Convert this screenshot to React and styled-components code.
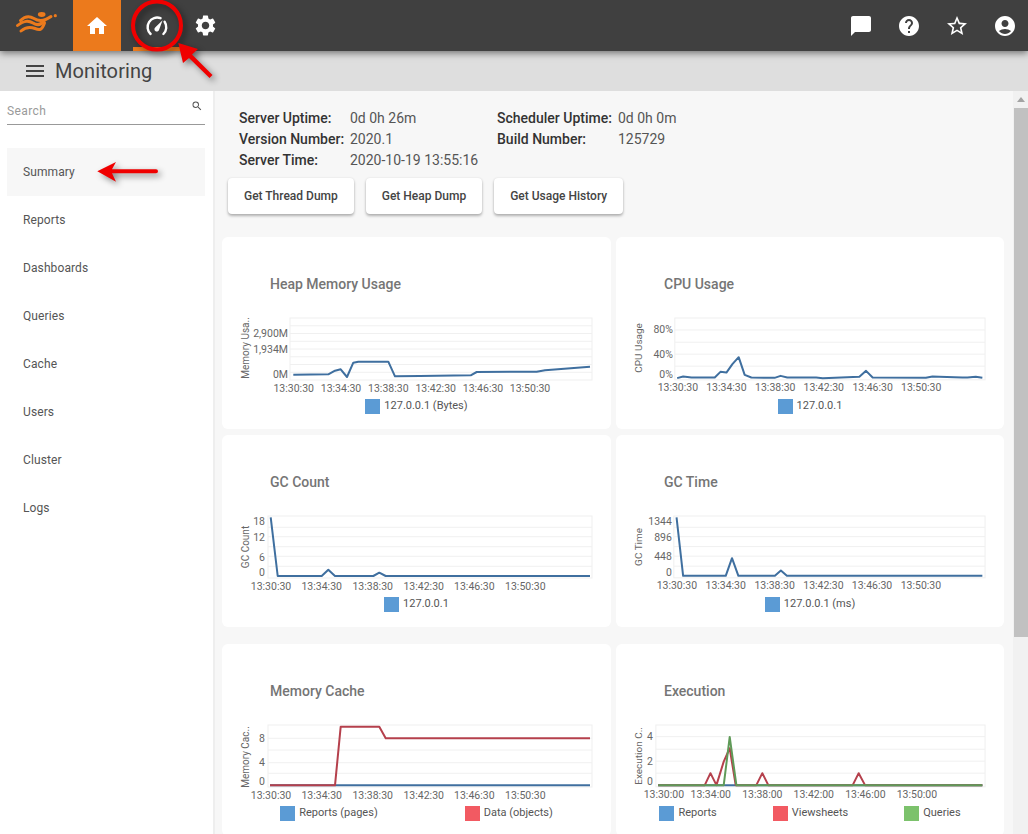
import React from 'react'
import styled, { createGlobalStyle } from 'styled-components'
import { MdHome, MdSettings, MdMenu, MdSearch, MdChatBubble, MdHelp, MdStarBorder, MdAccountCircle } from 'react-icons/md'

const BLUE = '#3f6f9f'
const RED = '#b5404c'
const GREEN = '#5f9a58'
const SWATCH_BLUE = '#5b9bd5'
const SWATCH_RED = '#f25a62'
const SWATCH_GREEN = '#7cc26c'

const navItems = ['Summary', 'Reports', 'Dashboards', 'Queries', 'Cache', 'Users', 'Cluster', 'Logs']

const times30 = ['13:30:30', '13:34:30', '13:38:30', '13:42:30', '13:46:30', '13:50:30']
const times00 = ['13:30:00', '13:34:00', '13:38:00', '13:42:00', '13:46:00', '13:50:00']

const heap = {
  title: 'Heap Memory Usage',
  axis: 'Memory Usa..',
  axisY: 32,
  plot: [68, 370],
  grid: [9.75, 17.5, 25.25, 33, 40.75, 48.5, 56.25],
  tickX: 66,
  ticks: [['2,900M', 17.7], ['1,934M', 33], ['0M', 58.3]],
  labels: times30,
  labelX: [71.7, 119, 166.3, 213.7, 261, 308],
  lines: [{ color: BLUE, points: '71.3,58.7 106.3,58.3 113,54.7 118.7,53.3 125,61 131.3,46.7 136.3,45.7 166.3,45.7 173,60.3 198,60 248.7,59.3 254.7,56 314.7,55.7 323,54.3 368,50.7' }],
  legend: [{ color: SWATCH_BLUE, text: '127.0.0.1 (Bytes)' }],
}

const cpu = {
  title: 'CPU Usage',
  axis: 'CPU Usage',
  axisY: 32,
  plot: [59, 370],
  grid: [14, 26.3, 38.3, 50.3],
  tickX: 57,
  ticks: [['80%', 14], ['40%', 38.3], ['0%', 58.3]],
  labels: times30,
  labelX: [62, 110.7, 159.7, 208.3, 257.3, 306],
  lines: [{ color: BLUE, points: '61.3,62.3 67.3,60.7 75.7,61.7 99,61.7 104.7,56 110.7,56.7 116.7,48.3 123,41.3 129,59 135.7,61.7 159,62 165,60 171.7,61.7 200.7,61.7 207.3,62.3 244,61 250.7,55 257.3,61.7 310.7,62 317.3,60.7 324,61 347.3,61.7 352.3,61.7 360.7,61 367.3,62' }],
  legend: [{ color: SWATCH_BLUE, text: '127.0.0.1' }],
}

const gcCount = {
  title: 'GC Count',
  axis: 'GC Count',
  axisY: 33,
  plot: [46, 370],
  grid: [13.3, 22.7, 32.7, 42.3, 52.3],
  tickX: 43,
  ticks: [['18', 7], ['12', 23.3], ['6', 43], ['0', 58.3]],
  labels: times30,
  labelX: [49, 99.7, 150.7, 201.7, 252.3, 303.3],
  lines: [{ color: BLUE, points: '48.7,3.3 55.7,62 99.7,62 106.3,55.7 113,62 151.3,62 157.3,58.7 163.7,62 368,62' }],
  legend: [{ color: SWATCH_BLUE, text: '127.0.0.1' }],
}

const gcTime = {
  title: 'GC Time',
  axis: 'GC Time',
  axisY: 33,
  plot: [58, 370],
  grid: [13.3, 22.7, 32.7, 42.3, 52.3],
  tickX: 56,
  ticks: [['1344', 7.7], ['896', 23.3], ['448', 43], ['0', 58.3]],
  labels: times30,
  labelX: [61, 110, 159, 208, 256.7, 305.7],
  lines: [{ color: BLUE, points: '60.7,3.3 67.3,62 110,62 116.3,44.3 122.7,62 159.3,62 165.3,56.7 171.3,62 367.3,62' }],
  legend: [{ color: SWATCH_BLUE, text: '127.0.0.1 (ms)' }],
}

const memoryCache = {
  title: 'Memory Cache',
  axis: 'Memory Cac..',
  axisY: 34,
  plot: [46, 370],
  grid: [15.3, 27, 39.7, 50.3],
  tickX: 43,
  ticks: [['8', 15.7], ['4', 39], ['0', 58.3]],
  labels: times30,
  labelX: [49, 99.7, 150.7, 201.7, 252.3, 303.3],
  lines: [
    { color: BLUE, points: '48,62.3 368,62.3' },
    { color: RED, points: '48,62.3 113,62.3 118.7,3.7 157.3,3.7 163.7,15.3 368,15.3' },
  ],
  legend: [
    { color: SWATCH_BLUE, text: 'Reports (pages)' },
    { color: SWATCH_RED, text: 'Data (objects)' },
  ],
  legendGap: 87,
}

const execution = {
  title: 'Execution',
  axis: 'Execution C..',
  axisY: 33,
  plot: [40, 370],
  grid: [13.7, 26.3, 38.3, 50.3],
  tickX: 37,
  ticks: [['4', 14], ['2', 38.3], ['0', 58.3]],
  labels: times00,
  labelX: [48, 95, 146.7, 198.3, 250, 301.7],
  lines: [
    { color: BLUE, points: '42.3,62.3 367.3,62.3' },
    { color: RED, points: '42.3,62.3 89,62.3 94.7,50.3 100.7,62.3 108,38.7 114,25.3 120,62.3 140.7,62.3 146.7,50.3 152.7,62.3 237.3,62.3 243.3,50.3 249.7,62.3 367.3,62.3' },
    { color: GREEN, points: '42.3,62.3 108,62.3 114,14 120.7,62.3 367.3,62.3' },
  ],
  legend: [
    { color: SWATCH_BLUE, text: 'Reports' },
    { color: SWATCH_RED, text: 'Viewsheets' },
    { color: SWATCH_GREEN, text: 'Queries' },
  ],
  legendGap: 56,
}

const chartGroups = [[heap, cpu, gcCount, gcTime], [memoryCache, execution]]

const GlobalStyle = createGlobalStyle`
  html, body {
    margin: 0;
    height: 100%;
    overflow: hidden;
    font-family: Roboto, "Liberation Sans", sans-serif;
  }
`

const Page = styled.div`
  position: relative;
  width: 1028px;
  height: 834px;
  display: flex;
  flex-direction: column;
  overflow: hidden;
  background: #f7f7f7;
`

const TopBar = styled.header`
  position: relative;
  z-index: 2;
  flex: none;
  height: 51px;
  display: flex;
  align-items: center;
  background: #404040;
  box-shadow: 0 2px 7px rgba(0, 0, 0, 0.5);
  color: #fff;
`

const LogoMark = styled.svg`
  flex: none;
  width: 44px;
  height: 44px;
  margin: 0 15px 0 14px;
`

const NavTab = styled.div`
  flex: none;
  box-sizing: border-box;
  width: 48px;
  height: 51px;
  margin-left: ${props => (props.spaced ? '12px' : '0')};
  padding-top: 4px;
  display: flex;
  align-items: center;
  justify-content: center;
  background: ${props => (props.home ? '#ec7a1c' : 'transparent')};
  border-bottom: 4px solid ${props => (props.current ? '#ec7a1c' : 'transparent')};
`

const ActionIcons = styled.div`
  margin-left: auto;
  display: flex;
  align-items: center;
  gap: 24px;
  padding-right: 11px;
`

const SubHeader = styled.div`
  flex: none;
  height: 40px;
  display: flex;
  align-items: center;
  gap: 8px;
  padding-left: 23px;
  background: #dedede;
  color: #444;
`

const PageTitle = styled.h1`
  margin: 0;
  font-size: 20px;
  font-weight: 400;
  letter-spacing: 0.1px;
`

const Body = styled.div`
  flex: 1;
  min-height: 0;
  display: flex;
`

const Sidebar = styled.aside`
  flex: none;
  width: 213px;
  box-sizing: content-box;
  background: #fff;
  border-right: 2px solid #eeeeee;
`

const SearchBox = styled.div`
  box-sizing: border-box;
  height: 34px;
  margin: 0 8px 23px 7px;
  padding-top: 7px;
  display: flex;
  align-items: center;
  justify-content: space-between;
  border-bottom: 1px solid #999;
  color: #9a9a9a;
  font-size: 12px;
  letter-spacing: 0.4px;
  svg {
    color: #555;
    margin: 0 2px 10px 0;
  }
`

const NavList = styled.nav`
  display: flex;
  flex-direction: column;
  margin: 0 8px 0 7px;
`

const NavItem = styled.div`
  height: 48px;
  display: flex;
  align-items: center;
  padding-left: 16px;
  font-size: 12px;
  letter-spacing: 0.1px;
  color: #555;
  background: ${props => (props.active ? '#f7f7f7' : 'transparent')};
`

const Main = styled.main`
  flex: 1;
  min-width: 0;
  overflow: hidden;
`

const InfoGrid = styled.div`
  display: grid;
  grid-template-columns: 111px 147px 121px auto;
  grid-auto-rows: 21px;
  align-items: center;
  padding: 16px 0 0 24px;
  font-size: 14px;
  color: #555;
`

const InfoLabel = styled.span`
  font-weight: 500;
  color: #333;
`

const ButtonRow = styled.div`
  display: flex;
  gap: 12px;
  margin: 8px 0 23px 13px;
`

const ActionButton = styled.button`
  height: 36px;
  padding: 0 16px;
  border: 0;
  border-radius: 4px;
  background: #fff;
  box-shadow: 0 2px 3px rgba(0, 0, 0, 0.28), 0 0 2px rgba(0, 0, 0, 0.1);
  font-family: inherit;
  font-size: 12px;
  font-weight: 500;
  color: #444;
`

const CardGrid = styled.div`
  display: grid;
  grid-template-columns: 389px 388px;
  gap: 6px 5px;
  margin: 0 0 17px 7px;
`

const Card = styled.section`
  box-sizing: border-box;
  height: 192px;
  padding-top: 37px;
  border-radius: 6px;
  background: #fff;
`

const CardTitle = styled.h2`
  margin: 0 0 22px 48px;
  font-size: 14px;
  line-height: 20px;
  font-weight: 500;
  color: #757575;
`

const ChartSvg = styled.svg`
  display: block;
  width: 100%;
  height: 80px;
`

const ChartText = styled.text`
  font-family: Roboto, "Liberation Sans", sans-serif;
  font-size: 10.5px;
  fill: #666;
  dominant-baseline: central;
`

const AxisTitle = styled(ChartText)`
  font-size: 10px;
  text-anchor: middle;
`

const Legend = styled.div`
  margin-top: 3px;
  display: flex;
  justify-content: center;
  gap: ${props => props.gap || 0}px;
`

const LegendItem = styled.div`
  display: flex;
  align-items: center;
  gap: 4px;
  font-size: 11px;
  color: #555;
`

const LegendLabel = styled.span`
  padding-bottom: 2px;
`

const Swatch = styled.span`
  flex: none;
  width: 15px;
  height: 15px;
  background: ${props => props.color};
`

const ScrollTrack = styled.div`
  flex: none;
  box-sizing: border-box;
  width: 15px;
  padding: 6px 0 0 1px;
  background: #f1f1f1;
`

const ScrollArrow = styled.div`
  width: 0;
  height: 0;
  margin: 0 auto 6px;
  border-left: 4px solid transparent;
  border-right: 4px solid transparent;
  border-bottom: 5px solid #a3a3a3;
`

const ScrollThumb = styled.div`
  height: 529px;
  background: #c1c1c1;
`

const Annotations = styled.svg`
  position: absolute;
  top: 0;
  left: 0;
  z-index: 5;
  width: 1028px;
  height: 834px;
  pointer-events: none;
  filter: drop-shadow(3px 3px 3px rgba(0, 0, 0, 0.45));
`

function Logo() {
  return (
    <LogoMark viewBox="14 3 44 44" fill="none" stroke="#ec7a1c" strokeWidth="3" strokeLinecap="round">
      <path d="M20.5 19.5C25 15 30 15 34 17.5S44 20.5 51 15.5" />
      <path d="M17.5 24.5C23 19.5 29 19.5 33 22S41 24 44 20" />
      <path d="M21 30C26 25.5 30 25.5 35 27.5S42 29 44.5 22" />
      <ellipse cx="41.7" cy="13.5" rx="3.8" ry="2.4" fill="#ec7a1c" stroke="none" />
      <circle cx="55.3" cy="14.7" r="1.6" fill="#ec7a1c" stroke="none" />
    </LogoMark>
  )
}

function GaugeIcon() {
  return (
    <svg width="24" height="24" viewBox="0 0 24 24" fill="none">
      <g stroke="#fff" strokeWidth="2.4" strokeLinecap="round">
        <path d="M5.6 20A9.5 9.5 0 0 1 15.5 4.2" />
        <path d="M19.6 7.8A9.5 9.5 0 0 1 18.4 20" />
      </g>
      <path d="M17.6 6.2L14.2 15.4a2.4 2.4 0 1 1-3.8-2.2z" fill="#fff" />
    </svg>
  )
}

function Chart({ chart }) {
  const [left, right] = chart.plot
  return (
    <Card>
      <CardTitle>{chart.title}</CardTitle>
      <ChartSvg viewBox="0 0 389 80" preserveAspectRatio="xMinYMin meet">
        <rect x={left} y="2" width={right - left} height="62" fill="#fff" stroke="#efefef" />
        {chart.grid.map(y => (
          <line key={y} x1={left} x2={right} y1={y} y2={y} stroke="#f0f0f0" />
        ))}
        {chart.lines.map((line, index) => (
          <polyline
            key={`line-${index}`}
            points={line.points}
            fill="none"
            stroke={line.color}
            strokeWidth="2"
            strokeLinejoin="round"
          />
        ))}
        <AxisTitle x="0" y="0" transform={`translate(23 ${chart.axisY}) rotate(-90)`}>
          {chart.axis}
        </AxisTitle>
        {chart.ticks.map(([label, y]) => (
          <ChartText key={label} x={chart.tickX} y={y} textAnchor="end">
            {label}
          </ChartText>
        ))}
        {chart.labels.map((label, index) => (
          <ChartText key={label} x={chart.labelX[index]} y="72" textAnchor="middle">
            {label}
          </ChartText>
        ))}
      </ChartSvg>
      <Legend gap={chart.legendGap}>
        {chart.legend.map(item => (
          <LegendItem key={item.text}>
            <Swatch color={item.color} />
            <LegendLabel>{item.text}</LegendLabel>
          </LegendItem>
        ))}
      </Legend>
    </Card>
  )
}

export default function App() {
  return (
    <Page>
      <GlobalStyle />
      <TopBar>
        <Logo />
        <NavTab home>
          <MdHome size={24} />
        </NavTab>
        <NavTab spaced current>
          <GaugeIcon />
        </NavTab>
        <NavTab>
          <MdSettings size={25} />
        </NavTab>
        <ActionIcons>
          <MdChatBubble size={24} />
          <MdHelp size={24} />
          <MdStarBorder size={24} />
          <MdAccountCircle size={24} />
        </ActionIcons>
      </TopBar>
      <SubHeader>
        <MdMenu size={24} />
        <PageTitle>Monitoring</PageTitle>
      </SubHeader>
      <Body>
        <Sidebar>
          <SearchBox>
            Search
            <MdSearch size={12} />
          </SearchBox>
          <NavList>
            {navItems.map(item => (
              <NavItem key={item} active={item === 'Summary'}>
                {item}
              </NavItem>
            ))}
          </NavList>
        </Sidebar>
        <Main>
          <InfoGrid>
            <InfoLabel>Server Uptime:</InfoLabel>
            <span>0d 0h 26m</span>
            <InfoLabel>Scheduler Uptime:</InfoLabel>
            <span>0d 0h 0m</span>
            <InfoLabel>Version Number:</InfoLabel>
            <span>2020.1</span>
            <InfoLabel>Build Number:</InfoLabel>
            <span>125729</span>
            <InfoLabel>Server Time:</InfoLabel>
            <span>2020-10-19 13:55:16</span>
          </InfoGrid>
          <ButtonRow>
            <ActionButton>Get Thread Dump</ActionButton>
            <ActionButton>Get Heap Dump</ActionButton>
            <ActionButton>Get Usage History</ActionButton>
          </ButtonRow>
          {chartGroups.map((group, index) => (
            <CardGrid key={`group-${index}`}>
              {group.map(chart => (
                <Chart key={chart.title} chart={chart} />
              ))}
            </CardGrid>
          ))}
        </Main>
        <ScrollTrack>
          <ScrollArrow />
          <ScrollThumb />
        </ScrollTrack>
      </Body>
      <Annotations viewBox="0 0 1028 834">
        <circle cx="157" cy="25.5" r="24" fill="none" stroke="#f00000" strokeWidth="4" />
        <path d="M178.3 43L198 49 192 54.5 212.5 75 209.5 78 189 58 183 63z" fill="#f00000" />
        <path d="M97.3 171.3L116 162 112 169.3H156a2 2 0 0 1 0 4H112L116 181.7z" fill="#f00000" />
      </Annotations>
    </Page>
  )
}
